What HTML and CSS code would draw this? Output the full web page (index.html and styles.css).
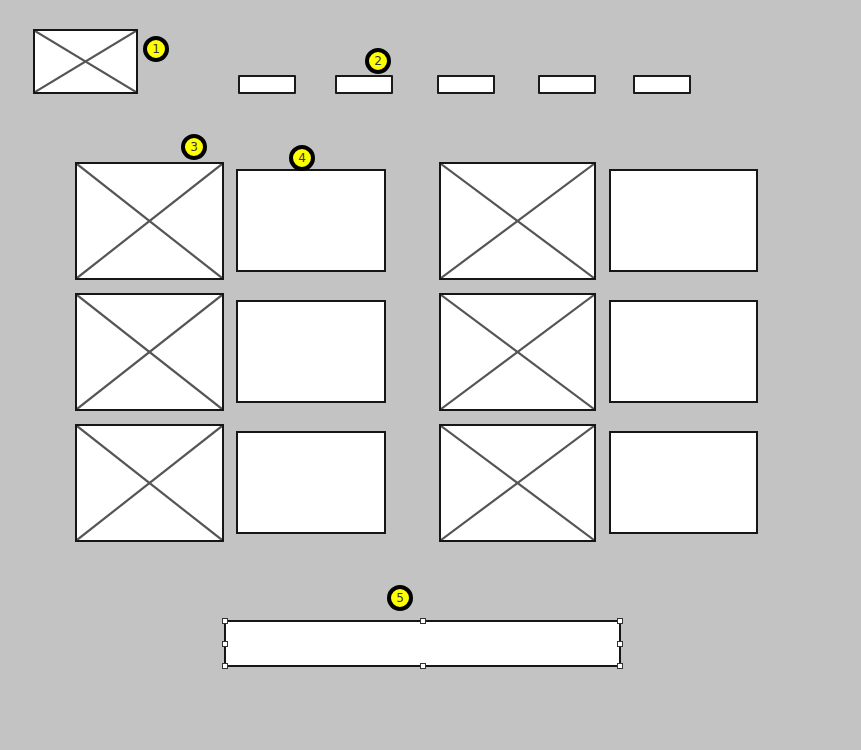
FILE: index.html
```html
<!DOCTYPE html>
<html>
<head>
<meta charset="utf-8">
<link rel="stylesheet" href="styles.css">
</head>
<body>
<div class="page">
  <header class="header">
    <div class="logo img-box">
      <svg class="cross" viewBox="0 0 100 100" preserveAspectRatio="none"><line x1="0" y1="0" x2="100" y2="100"/><line x1="100" y1="0" x2="0" y2="100"/></svg>
      <span class="badge badge-1">1</span>
    </div>
    <nav class="nav">
      <div class="nav-btn"></div>
      <div class="nav-btn nb2"><span class="badge badge-2">2</span></div>
      <div class="nav-btn nb3"></div>
      <div class="nav-btn nb4"></div>
      <div class="nav-btn nb5"></div>
    </nav>
  </header>

  <main class="content">
    <section class="group group-left">
      <div class="img-box tile"><svg class="cross" viewBox="0 0 100 100" preserveAspectRatio="none"><line x1="0" y1="0" x2="100" y2="100"/><line x1="100" y1="0" x2="0" y2="100"/></svg><span class="badge badge-3">3</span></div>
      <div class="text-box"><span class="badge badge-4">4</span></div>
      <div class="img-box tile"><svg class="cross" viewBox="0 0 100 100" preserveAspectRatio="none"><line x1="0" y1="0" x2="100" y2="100"/><line x1="100" y1="0" x2="0" y2="100"/></svg></div>
      <div class="text-box"></div>
      <div class="img-box tile"><svg class="cross" viewBox="0 0 100 100" preserveAspectRatio="none"><line x1="0" y1="0" x2="100" y2="100"/><line x1="100" y1="0" x2="0" y2="100"/></svg></div>
      <div class="text-box"></div>
    </section>
    <section class="group group-right">
      <div class="img-box tile"><svg class="cross" viewBox="0 0 100 100" preserveAspectRatio="none"><line x1="0" y1="0" x2="100" y2="100"/><line x1="100" y1="0" x2="0" y2="100"/></svg></div>
      <div class="text-box"></div>
      <div class="img-box tile"><svg class="cross" viewBox="0 0 100 100" preserveAspectRatio="none"><line x1="0" y1="0" x2="100" y2="100"/><line x1="100" y1="0" x2="0" y2="100"/></svg></div>
      <div class="text-box"></div>
      <div class="img-box tile"><svg class="cross" viewBox="0 0 100 100" preserveAspectRatio="none"><line x1="0" y1="0" x2="100" y2="100"/><line x1="100" y1="0" x2="0" y2="100"/></svg></div>
      <div class="text-box"></div>
    </section>
  </main>

  <footer class="footer">
    <div class="bar">
      <span class="badge badge-5">5</span>
      <span class="handle h-tl"></span>
      <span class="handle h-tc"></span>
      <span class="handle h-tr"></span>
      <span class="handle h-ml"></span>
      <span class="handle h-mr"></span>
      <span class="handle h-bl"></span>
      <span class="handle h-bc"></span>
      <span class="handle h-br"></span>
    </div>
  </footer>
</div>
</body>
</html>
```

FILE: styles.css
```css
* { box-sizing: border-box; }

html, body {
  margin: 0;
  padding: 0;
}

body {
  background: #c3c3c3;
  font-family: "DejaVu Sans", "Liberation Sans", sans-serif;
  width: 861px;
  height: 750px;
  overflow: hidden;
}

.page {
  padding: 29px 0 0 0;
}

.header {
  display: flex;
  align-items: flex-end;
  padding-left: 33px;
}

.img-box {
  position: relative;
  background: #fff;
  border: 2px solid #161616;
}

.cross {
  display: block;
  width: 100%;
  height: 100%;
}

.cross line {
  stroke: #555;
  stroke-width: 2.2;
  vector-effect: non-scaling-stroke;
}

.logo {
  width: 105px;
  height: 65px;
}

.nav {
  display: flex;
  margin-left: 100px;
}

.nav-btn {
  position: relative;
  width: 58px;
  height: 19px;
  background: #fff;
  border: 2px solid #1a1a1a;
  border-radius: 1px;
}

.nb2 { margin-left: 39px; }
.nb3 { margin-left: 44px; }
.nb4 { margin-left: 43px; }
.nb5 { margin-left: 37px; }

.content {
  display: flex;
  gap: 53px;
  padding-left: 75px;
  margin-top: 68px;
}

.group {
  display: grid;
  grid-template-rows: repeat(3, 118px);
  row-gap: 13px;
}

.group-left {
  grid-template-columns: 149px 150px;
  column-gap: 12px;
}

.group-right {
  grid-template-columns: 157px 149px;
  column-gap: 13px;
}

.text-box {
  position: relative;
  align-self: start;
  margin-top: 7px;
  height: 103px;
  background: #fff;
  border: 2px solid #161616;
}

.footer {
  padding-left: 224px;
  margin-top: 78px;
}

.bar {
  position: relative;
  width: 397px;
  height: 47px;
  background: #fff;
  border: 2px solid #161616;
}

.badge {
  position: absolute;
  width: 26px;
  height: 26px;
  border-radius: 50%;
  background: #ffff00;
  border: 4px solid #000;
  color: #33334a;
  font-size: 12px;
  line-height: 18px;
  text-align: center;
  z-index: 2;
}

.badge-1 { left: 108px; top: 5px; }
.badge-2 { left: 28px; top: -29px; }
.badge-3 { left: 104px; top: -30px; }
.badge-4 { left: 51px; top: -26px; }
.badge-5 { left: 161px; top: -37px; }

.handle {
  position: absolute;
  width: 6px;
  height: 6px;
  background: #fff;
  border: 1px solid #333;
  transform: translate(-50%, -50%);
  z-index: 3;
}

.h-tl { left: -1px; top: -1px; }
.h-tc { left: 50%; top: -1px; }
.h-tr { left: calc(100% + 1px); top: -1px; }
.h-ml { left: -1px; top: 50%; }
.h-mr { left: calc(100% + 1px); top: 50%; }
.h-bl { left: -1px; top: calc(100% + 1px); }
.h-bc { left: 50%; top: calc(100% + 1px); }
.h-br { left: calc(100% + 1px); top: calc(100% + 1px); }
```
